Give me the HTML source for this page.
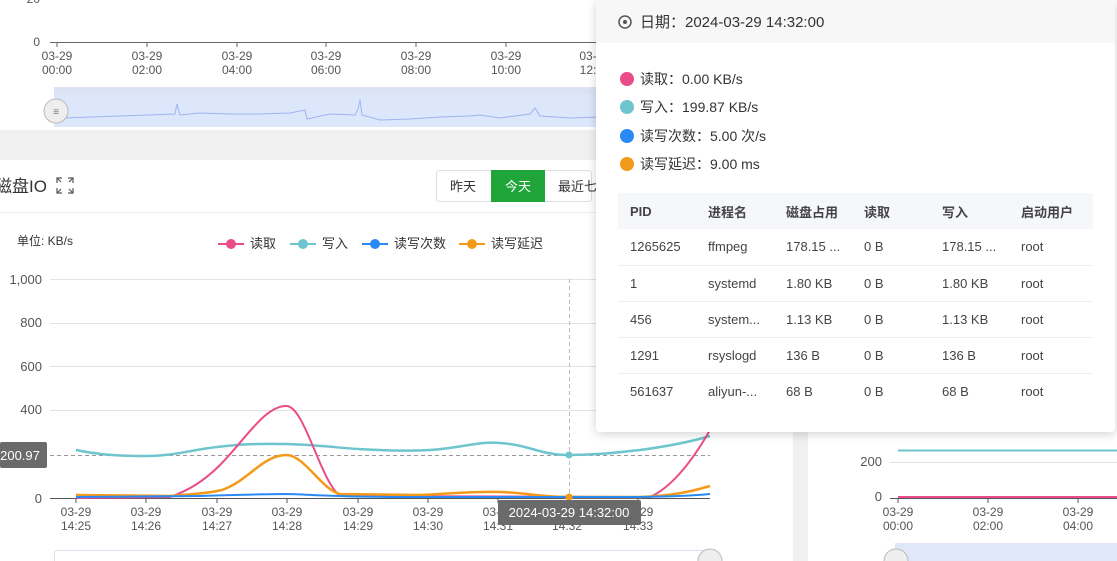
<!DOCTYPE html>
<html><head><meta charset="utf-8"><style>
*{margin:0;padding:0;box-sizing:border-box}
body{width:1117px;height:561px;overflow:hidden;background:#f0f0f0;font-family:"Liberation Sans","Noto Sans CJK SC",sans-serif;position:relative;color:#333}
.abs{position:absolute}
svg text{font-family:"Liberation Sans","Noto Sans CJK SC",sans-serif}
.tt{left:596px;top:0;width:519px;height:432px;background:#fff;border-radius:4px;box-shadow:0 2px 10px rgba(0,0,0,.18)}
.th{height:43px;background:#f7f7f7;font-size:15px;display:flex;align-items:center;padding-left:22px;color:#333}
.leg{font-size:14px;color:#333;position:absolute;left:24px;display:flex;align-items:center}
.dot{width:14px;height:14px;border-radius:50%;margin-right:6px}
table{position:absolute;left:22px;top:193px;width:475px;border-collapse:collapse;font-size:13px;color:#444}
th{background:#f5f7fb;height:36px;text-align:left;font-weight:bold;padding-left:12px}
td{height:36px;padding-left:12px;border-bottom:1px solid #eee}
</style></head><body>
<div class="abs" style="left:0;top:0;width:800px;height:130px;background:#fff"></div>
<div class="abs" style="left:0;top:160px;width:793px;height:401px;background:#fff"></div>
<div class="abs" style="left:808px;top:0;width:309px;height:561px;background:#fff"></div>
<svg class="abs" style="left:0;top:0" width="1117" height="561">
 <text x="40" y="46" font-size="12" fill="#555" text-anchor="end">0</text>
 <text x="40" y="3" font-size="12" fill="#555" text-anchor="end">20</text>
 <line x1="50" y1="42.5" x2="600" y2="42.5" stroke="#666"/>
 <g font-size="12" fill="#555" text-anchor="middle">
  <g><line x1="57" y1="42" x2="57" y2="47" stroke="#666"/><text x="57" y="60">03-29</text><text x="57" y="74">00:00</text></g>
  <g><line x1="147" y1="42" x2="147" y2="47" stroke="#666"/><text x="147" y="60">03-29</text><text x="147" y="74">02:00</text></g>
  <g><line x1="237" y1="42" x2="237" y2="47" stroke="#666"/><text x="237" y="60">03-29</text><text x="237" y="74">04:00</text></g>
  <g><line x1="326" y1="42" x2="326" y2="47" stroke="#666"/><text x="326" y="60">03-29</text><text x="326" y="74">06:00</text></g>
  <g><line x1="416" y1="42" x2="416" y2="47" stroke="#666"/><text x="416" y="60">03-29</text><text x="416" y="74">08:00</text></g>
  <g><line x1="506" y1="42" x2="506" y2="47" stroke="#666"/><text x="506" y="60">03-29</text><text x="506" y="74">10:00</text></g>
  <text x="588" y="60">03-</text><text x="588" y="74">12:</text>
 </g>
 <rect x="54" y="87" width="546" height="8" fill="#dbe3f3"/>
 <rect x="54" y="95" width="546" height="32" fill="#dce7fc"/>
 <polyline fill="none" stroke="#9fb4ee" stroke-width="1" points="64,118 90,117 120,116 150,115 175,114 177,104 180,115 200,113 230,114 260,114 290,113 305,110 307,119 330,114 355,115 358,109 360,100 362,115 380,120 410,119 440,117 470,116 480,115 500,118 530,114 535,108 540,116 570,118 600,117"/>
 <circle cx="56" cy="111" r="12" fill="#eee" stroke="#bbb"/>
 <text x="56" y="115" font-size="10" fill="#777" text-anchor="middle">≡</text>
 <rect x="0" y="130" width="800" height="30" fill="#f0f0f0"/>
 <g stroke="#e3e3e3">
  <line x1="50" y1="279.5" x2="710" y2="279.5"/><line x1="50" y1="323.5" x2="710" y2="323.5"/>
  <line x1="50" y1="366.5" x2="710" y2="366.5"/><line x1="50" y1="410.5" x2="710" y2="410.5"/>
 </g>
 <g font-size="13" fill="#555" text-anchor="end">
  <text x="42" y="284">1,000</text><text x="42" y="327">800</text><text x="42" y="371">600</text><text x="42" y="414">400</text><text x="42" y="503">0</text>
 </g>
 <line x1="50" y1="498.5" x2="710" y2="498.5" stroke="#555"/>
 <line x1="569.5" y1="279" x2="569.5" y2="498" stroke="#bbb" stroke-dasharray="4,3"/>
 <line x1="50" y1="455.5" x2="710" y2="455.5" stroke="#999" stroke-dasharray="4,3"/>
 <path d="M76,450 C100,455 120,456 146,456 C175,456 190,450 217,447 C250,443 270,444 287,444 C320,445 340,448 358,449 C390,451 410,451 430,450 C460,448 480,441 500,443 C530,445 540,455 569,455 C600,455 620,452 640,450 C670,446 690,442 710,436" fill="none" stroke="#6ec5cd" stroke-width="2.5"/>
 <path d="M76,498 L170,497 C190,490 205,480 220,465 C245,440 265,405 287,406 C305,408 320,480 340,496 L650,497 C670,488 690,465 710,430" fill="none" stroke="#ea4c89" stroke-width="2"/>
 <path d="M76,495 L170,496 C190,494 205,494 222,490 C250,480 262,455 287,455 C305,456 322,490 340,494 L420,495 C450,494 470,491 500,492 C530,493 540,497 569,497 L640,497 C670,496 690,492 710,486" fill="none" stroke="#f39a1a" stroke-width="2.5"/>
 <path d="M76,497 L200,496 C240,495 260,494 287,494 C320,495 340,497 400,497 L620,497 C660,497 690,496 710,494" fill="none" stroke="#2a8af5" stroke-width="2"/>
 <circle cx="569" cy="455" r="3.5" fill="#6ec5cd"/><circle cx="569" cy="497" r="3.5" fill="#f39a1a"/>
 <g font-size="12" fill="#555" text-anchor="middle">
  <g><line x1="76" y1="498" x2="76" y2="503" stroke="#555"/><text x="76" y="516">03-29</text><text x="76" y="530">14:25</text></g>
  <g><line x1="146" y1="498" x2="146" y2="503" stroke="#555"/><text x="146" y="516">03-29</text><text x="146" y="530">14:26</text></g>
  <g><line x1="217" y1="498" x2="217" y2="503" stroke="#555"/><text x="217" y="516">03-29</text><text x="217" y="530">14:27</text></g>
  <g><line x1="287" y1="498" x2="287" y2="503" stroke="#555"/><text x="287" y="516">03-29</text><text x="287" y="530">14:28</text></g>
  <g><line x1="358" y1="498" x2="358" y2="503" stroke="#555"/><text x="358" y="516">03-29</text><text x="358" y="530">14:29</text></g>
  <g><line x1="428" y1="498" x2="428" y2="503" stroke="#555"/><text x="428" y="516">03-29</text><text x="428" y="530">14:30</text></g>
  <g><line x1="498" y1="498" x2="498" y2="503" stroke="#555"/><text x="498" y="516">03-29</text><text x="498" y="530">14:31</text></g>
  <g><text x="567" y="530">14:32</text></g>
  <g><line x1="638" y1="498" x2="638" y2="503" stroke="#555"/><text x="638" y="516">03-29</text><text x="638" y="530">14:33</text></g>
 </g>
 <rect x="498" y="500" width="143" height="25" rx="2" fill="#6a6a6a"/>
 <text x="569" y="517" font-size="13" fill="#fff" text-anchor="middle">2024-03-29 14:32:00</text>
 <rect x="0" y="442" width="47" height="26" rx="2" fill="#6a6a6a"/>
 <text x="20" y="460" font-size="13" fill="#fff" text-anchor="middle">200.97</text>
 <rect x="54.5" y="550.5" width="655" height="20" rx="3" fill="#fff" stroke="#dde"/>
 <circle cx="710" cy="561" r="12" fill="#eee" stroke="#bbb"/>
 <g font-size="13" fill="#333">
  <line x1="218" y1="244" x2="244" y2="244" stroke="#ea4c89" stroke-width="2"/><circle cx="231" cy="244" r="5" fill="#ea4c89"/><text x="250" y="248">读取</text>
  <line x1="290" y1="244" x2="316" y2="244" stroke="#6ec5cd" stroke-width="2"/><circle cx="303" cy="244" r="5" fill="#6ec5cd"/><text x="322" y="248">写入</text>
  <line x1="362" y1="244" x2="388" y2="244" stroke="#2a8af5" stroke-width="2"/><circle cx="375" cy="244" r="5" fill="#2a8af5"/><text x="394" y="248">读写次数</text>
  <line x1="459" y1="244" x2="485" y2="244" stroke="#f39a1a" stroke-width="2"/><circle cx="472" cy="244" r="5" fill="#f39a1a"/><text x="491" y="248">读写延迟</text>
 </g>
 <text x="17" y="245" font-size="12" fill="#333">单位:  KB/s</text>
 <line x1="0" y1="212.5" x2="793" y2="212.5" stroke="#eee"/>
 <text x="-5" y="192" font-size="17" fill="#333">磁盘IO</text>
 <g stroke="#555" stroke-width="1.2" fill="none">
  <path d="M57,183 v-5 h5 M68,178 h5 v5 M57,188 v5 h5 M68,193 h5 v-5"/>
  <path d="M57,178 l4,4 M73,178 l-4,4 M57,193 l4,-4 M73,193 l-4,-4"/>
 </g>
 <rect x="436.5" y="170.5" width="155" height="31" rx="3" fill="#fff" stroke="#ddd"/>
 <rect x="491" y="170" width="54" height="32" fill="#20a53a"/>
 <text x="463" y="191" font-size="13" fill="#333" text-anchor="middle">昨天</text>
 <text x="518" y="191" font-size="13" fill="#fff" text-anchor="middle">今天</text>
 <text x="558" y="191" font-size="13" fill="#333">最近七</text>
 <g font-size="13" fill="#555" text-anchor="end"><text x="882" y="466">200</text><text x="882" y="501">0</text></g>
 <line x1="890" y1="462.5" x2="1117" y2="462.5" stroke="#e3e3e3"/>
 <line x1="890" y1="498.5" x2="1117" y2="498.5" stroke="#555"/>
 <line x1="898" y1="450.5" x2="1117" y2="450.5" stroke="#6ec5cd" stroke-width="2"/>
 <line x1="898" y1="497" x2="1117" y2="497" stroke="#ea4c89" stroke-width="2"/>
 <g font-size="12" fill="#555" text-anchor="middle">
  <g><line x1="898" y1="498" x2="898" y2="503" stroke="#555"/><text x="898" y="516">03-29</text><text x="898" y="530">00:00</text></g>
  <g><line x1="988" y1="498" x2="988" y2="503" stroke="#555"/><text x="988" y="516">03-29</text><text x="988" y="530">02:00</text></g>
  <g><line x1="1078" y1="498" x2="1078" y2="503" stroke="#555"/><text x="1078" y="516">03-29</text><text x="1078" y="530">04:00</text></g>
 </g>
 <rect x="895" y="543" width="222" height="18" fill="#dfe7f8"/>
 <circle cx="896" cy="561" r="12" fill="#eee" stroke="#bbb"/>
</svg>
<div class="abs tt">
 <div class="th"><svg width="14" height="14" style="margin-right:8px"><circle cx="7" cy="7" r="6" fill="none" stroke="#555" stroke-width="1.5"/><circle cx="7" cy="7" r="2" fill="#555"/></svg>日期：2024-03-29 14:32:00</div>
 <div class="leg" style="top:69px"><span class="dot" style="background:#ea4c89"></span>读取：0.00 KB/s</div>
 <div class="leg" style="top:97px"><span class="dot" style="background:#6ec5cd"></span>写入：199.87 KB/s</div>
 <div class="leg" style="top:126px"><span class="dot" style="background:#2a8af5"></span>读写次数：5.00 次/s</div>
 <div class="leg" style="top:154px"><span class="dot" style="background:#f39a1a"></span>读写延迟：9.00 ms</div>
 <table>
  <tr><th style="width:78px">PID</th><th style="width:78px">进程名</th><th style="width:78px">磁盘占用</th><th style="width:78px">读取</th><th style="width:79px">写入</th><th>启动用户</th></tr>
  <tr><td>1265625</td><td>ffmpeg</td><td>178.15 ...</td><td>0 B</td><td>178.15 ...</td><td>root</td></tr>
  <tr><td>1</td><td>systemd</td><td>1.80 KB</td><td>0 B</td><td>1.80 KB</td><td>root</td></tr>
  <tr><td>456</td><td>system...</td><td>1.13 KB</td><td>0 B</td><td>1.13 KB</td><td>root</td></tr>
  <tr><td>1291</td><td>rsyslogd</td><td>136 B</td><td>0 B</td><td>136 B</td><td>root</td></tr>
  <tr><td style="border:none">561637</td><td style="border:none">aliyun-...</td><td style="border:none">68 B</td><td style="border:none">0 B</td><td style="border:none">68 B</td><td style="border:none">root</td></tr>
 </table>
</div>
</body></html>
